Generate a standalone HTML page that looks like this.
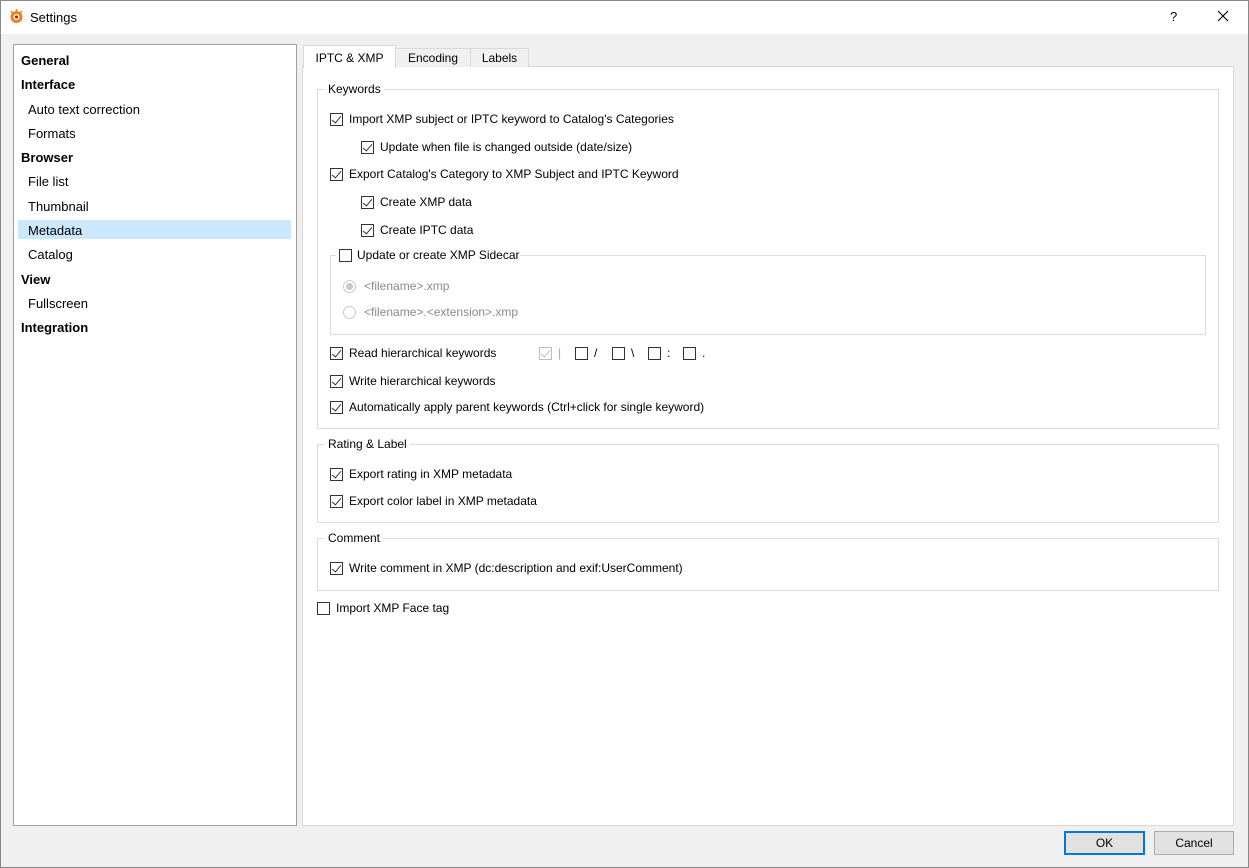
<!DOCTYPE html>
<html><head><style>
*{box-sizing:border-box;margin:0;padding:0}
body{width:1249px;height:868px;background:#f0f0f0;font-family:"Liberation Sans",sans-serif;font-size:12px;color:#000;position:relative;overflow:hidden}
.a{position:absolute;white-space:nowrap}
.cb{position:absolute;width:13px;height:13px;border:1px solid #333;background:#fff}
.cb.c::after{content:"";position:absolute;left:3px;top:0px;width:4px;height:8px;border:solid #333;border-width:0 1.5px 1.5px 0;transform:rotate(40deg)}
.cb.d{border-color:#bcbcbc}
.cb.d::after{border-color:#bcbcbc}
.rd{position:absolute;width:13px;height:13px;border:1px solid #c8c8c8;border-radius:50%;background:#fff}
.grp{position:absolute;border:1px solid #dcdcdc}
.gt{position:absolute;background:#fff;padding:0 3px}
.nav{position:absolute;left:21px;font-size:13px}
.b{font-weight:bold;left:21px}
.s{left:28px}
</style></head><body>
<div class="a" style="left:0;top:0;width:1249px;height:34px;background:#fff;border:1px solid #888;border-bottom:none"></div>
<div class="a" style="left:0;top:0;width:1249px;height:868px;border:1px solid #888;"></div>
<svg class="a" style="left:8px;top:8px" width="17" height="17" viewBox="0 0 17 17"><circle cx="8.5" cy="9" r="6" fill="#f08020"/><circle cx="8.5" cy="9" r="3" fill="#fff"/><circle cx="8.5" cy="9" r="1.6" fill="#c02000"/><path d="M3 3l2 2M8.5 1v3M14 3l-2 2" stroke="#f08020" stroke-width="1.5"/></svg>
<div class="a" style="left:30px;top:10px;font-size:13px">Settings</div>
<div class="a" style="left:1170px;top:9px;font-size:13px">?</div>
<svg class="a" style="left:1217px;top:10px" width="12" height="12"><path d="M1 1L11 11M11 1L1 11" stroke="#000" stroke-width="1.1"/></svg>

<div class="a" style="left:13px;top:44px;width:284px;height:782px;background:#fff;border:1px solid #a0a0a0"></div>
<div class="a" style="left:18px;top:220px;width:273px;height:19px;background:#cce8ff"></div>
<div class="a nav b" style="top:53px">General</div>
<div class="a nav b" style="top:77px">Interface</div>
<div class="a nav s" style="top:102px">Auto text correction</div>
<div class="a nav s" style="top:126px">Formats</div>
<div class="a nav b" style="top:150px">Browser</div>
<div class="a nav s" style="top:174px">File list</div>
<div class="a nav s" style="top:199px">Thumbnail</div>
<div class="a nav s" style="top:223px">Metadata</div>
<div class="a nav s" style="top:247px">Catalog</div>
<div class="a nav b" style="top:272px">View</div>
<div class="a nav s" style="top:296px">Fullscreen</div>
<div class="a nav b" style="top:320px">Integration</div>

<div class="a" style="left:302px;top:66px;width:932px;height:760px;background:#fff;border:1px solid #d9d9d9"></div>
<div class="a" style="left:395px;top:48px;width:76px;height:19px;background:#f0f0f0;border:1px solid #d9d9d9;border-bottom:none;text-align:center;line-height:19px">Encoding</div>
<div class="a" style="left:470px;top:48px;width:59px;height:19px;background:#f0f0f0;border:1px solid #d9d9d9;border-bottom:none;text-align:center;line-height:19px">Labels</div>
<div class="a" style="left:303px;top:45px;width:93px;height:23px;background:#fff;border:1px solid #d9d9d9;border-bottom:none;text-align:center;line-height:24px">IPTC &amp; XMP</div>

<div class="grp" style="left:317px;top:89px;width:902px;height:340px"></div>
<div class="a gt" style="left:325px;top:82px">Keywords</div>
<div class="grp" style="left:317px;top:444px;width:902px;height:79px"></div>
<div class="a gt" style="left:325px;top:437px">Rating &amp; Label</div>
<div class="grp" style="left:317px;top:538px;width:902px;height:53px"></div>
<div class="a gt" style="left:325px;top:531px">Comment</div>
<div class="grp" style="left:330px;top:255px;width:876px;height:80px"></div>
<div class="a" style="left:336px;top:247px;width:184px;height:16px;background:#fff"></div>

<div class="cb c" style="left:330px;top:113px"></div><div class="a" style="left:349px;top:112px">Import XMP subject or IPTC keyword to Catalog's Categories</div>
<div class="cb c" style="left:361px;top:141px"></div><div class="a" style="left:380px;top:140px">Update when file is changed outside (date/size)</div>
<div class="cb c" style="left:330px;top:168px"></div><div class="a" style="left:349px;top:167px">Export Catalog's Category to XMP Subject and IPTC Keyword</div>
<div class="cb c" style="left:361px;top:196px"></div><div class="a" style="left:380px;top:195px">Create XMP data</div>
<div class="cb c" style="left:361px;top:224px"></div><div class="a" style="left:380px;top:223px">Create IPTC data</div>
<div class="cb" style="left:339px;top:249px"></div><div class="a" style="left:357px;top:248px">Update or create XMP Sidecar</div>
<div class="rd" style="left:343px;top:280px"></div><div class="a" style="left:346px;top:283px;width:7px;height:7px;border-radius:50%;background:#c8c8c8"></div><div class="a" style="left:364px;top:279px;color:#8a8a8a">&lt;filename&gt;.xmp</div>
<div class="rd" style="left:343px;top:306px"></div><div class="a" style="left:364px;top:305px;color:#8a8a8a">&lt;filename&gt;.&lt;extension&gt;.xmp</div>
<div class="cb c" style="left:330px;top:347px"></div><div class="a" style="left:349px;top:346px">Read hierarchical keywords</div>
<div class="cb c d" style="left:539px;top:347px"></div><div class="a" style="left:558px;top:346px;color:#aaa">|</div>
<div class="cb" style="left:575px;top:347px"></div><div class="a" style="left:594px;top:346px">/</div>
<div class="cb" style="left:612px;top:347px"></div><div class="a" style="left:631px;top:346px">\</div>
<div class="cb" style="left:648px;top:347px"></div><div class="a" style="left:667px;top:346px">:</div>
<div class="cb" style="left:683px;top:347px"></div><div class="a" style="left:702px;top:346px">.</div>
<div class="cb c" style="left:330px;top:375px"></div><div class="a" style="left:349px;top:374px">Write hierarchical keywords</div>
<div class="cb c" style="left:330px;top:401px"></div><div class="a" style="left:349px;top:400px">Automatically apply parent keywords (Ctrl+click for single keyword)</div>
<div class="cb c" style="left:330px;top:468px"></div><div class="a" style="left:349px;top:467px">Export rating in XMP metadata</div>
<div class="cb c" style="left:330px;top:495px"></div><div class="a" style="left:349px;top:494px">Export color label in XMP metadata</div>
<div class="cb c" style="left:330px;top:562px"></div><div class="a" style="left:349px;top:561px">Write comment in XMP (dc:description and exif:UserComment)</div>
<div class="cb" style="left:317px;top:602px"></div><div class="a" style="left:336px;top:601px">Import XMP Face tag</div>

<div class="a" style="left:1064px;top:831px;width:81px;height:24px;background:#e1e1e1;border:2px solid #0078d7;text-align:center;line-height:20px">OK</div>
<div class="a" style="left:1154px;top:831px;width:80px;height:24px;background:#e1e1e1;border:1px solid #adadad;text-align:center;line-height:22px">Cancel</div>
</body></html>
